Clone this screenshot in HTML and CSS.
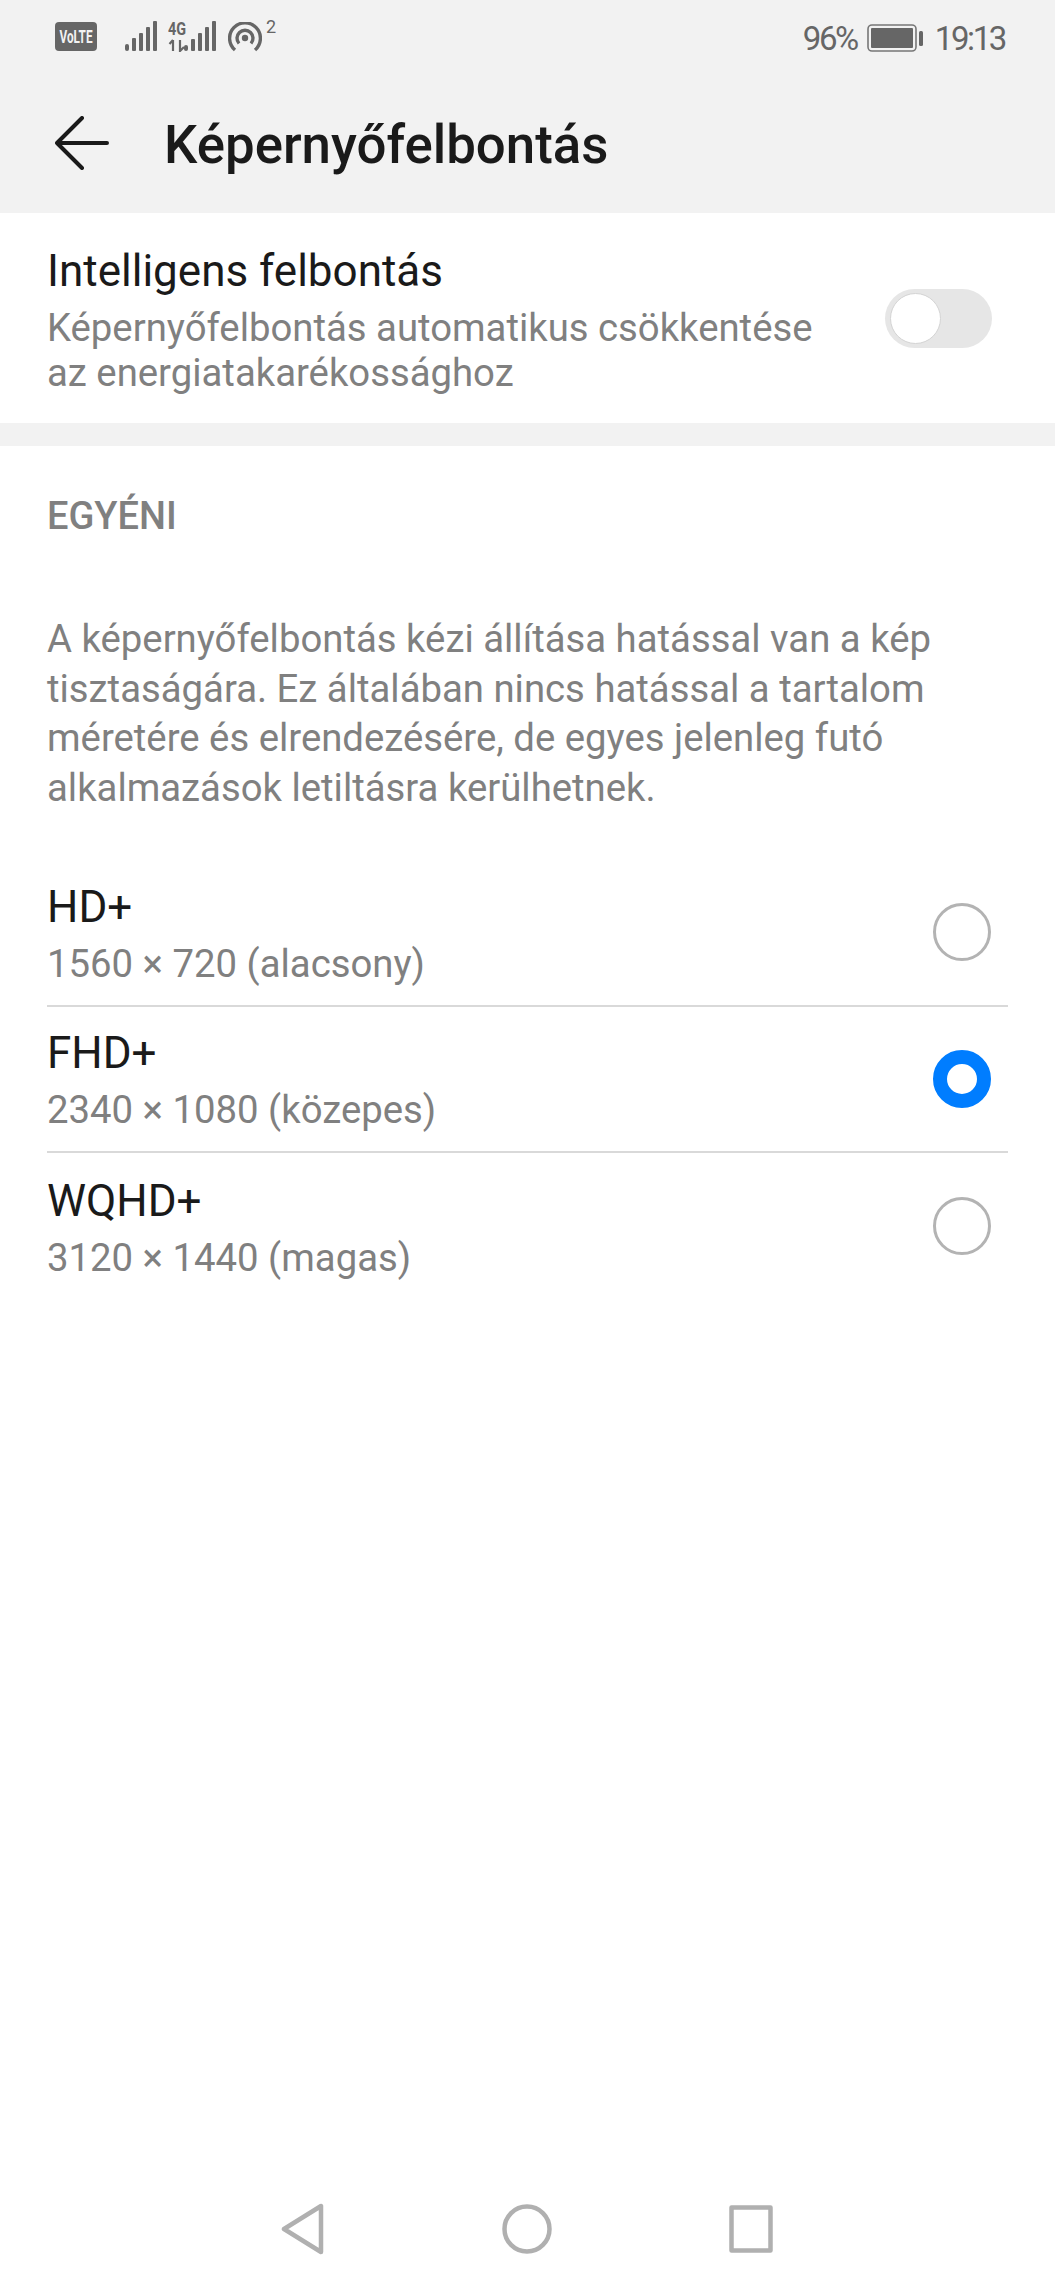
FILE: index.html
```html
<!DOCTYPE html>
<html lang="hu">
<head>
  <meta charset="UTF-8" />
  <title>Képernyőfelbontás</title>
  <link rel="stylesheet" href="styles.css">
</head>
<body>
  <div class="page">
    <header class="top">
      <div class="status">
        <div class="status-left">
          <svg class="ic-volte" width="42" height="29" viewBox="0 0 42 29">
            <rect width="42" height="29" rx="4" fill="#666"/>
            <text transform="translate(21 21) scale(.62 1)" text-anchor="middle" font-family="Roboto" font-weight="700" font-size="19" fill="#f2f2f2">VoLTE</text>
          </svg>
          <svg class="ic-sig" width="32" height="31" viewBox="0 0 32 31" fill="#666">
            <rect x="0" y="23" width="4" height="7" rx="2"/>
            <rect x="7" y="17" width="4" height="13" rx="1"/>
            <rect x="14" y="12" width="4" height="18" rx="1"/>
            <rect x="21" y="6" width="4" height="24" rx="1"/>
            <rect x="28" y="0" width="4" height="30" rx="1"/>
          </svg>
          <svg class="ic-sig4g" width="48" height="37" viewBox="0 -6 48 37" fill="#666">
            <text transform="translate(0 13.5) scale(.8 1)" font-family="Roboto" font-weight="700" font-size="18">4G</text>
            <path d="M5 19v11M1.5 23l3.5-4M12 19v11l4-4" fill="none" stroke="#666" stroke-width="2.2"/>
            <rect x="16" y="24" width="4" height="6" rx="2"/>
            <rect x="23" y="18" width="4" height="12" rx="1"/>
            <rect x="30" y="12" width="4" height="18" rx="1"/>
            <rect x="37" y="6" width="4" height="24" rx="1"/>
            <rect x="44" y="0" width="4" height="30" rx="1"/>
          </svg>
          <svg class="ic-hotspot" width="34" height="30" viewBox="0 0 34 30" fill="none" stroke="#666" stroke-width="3.4">
            <path d="M7 28A15.4 15.4 0 1 1 27 28"/>
            <path d="M11 21.5A8 8 0 1 1 23 21.5"/>
            <circle cx="17" cy="16" r="3.2" fill="#666" stroke="none"/>
          </svg>
          <span class="hotspot-count">2</span>
        </div>
        <div class="status-right">
          <span class="status-text">96%</span>
          <svg class="ic-batt" width="56" height="28" viewBox="0 0 56 28">
            <rect x="1" y="1" width="48" height="26" rx="4" fill="none" stroke="#777" stroke-width="1.6"/>
            <rect x="4" y="4" width="42" height="20" rx="1" fill="#666"/>
            <rect x="52" y="7" width="4" height="15" rx="1.5" fill="#666"/>
          </svg>
          <span class="status-text">19:13</span>
        </div>
      </div>
      <div class="toolbar">
        <svg class="ic-back" width="54" height="54" viewBox="0 0 54 54" fill="none" stroke="#1a1a1a" stroke-width="4" stroke-linecap="round" stroke-linejoin="round">
          <path d="M52 27H2M27 2L2 27l25 25"/>
        </svg>
        <h1 class="title">Képernyőfelbontás</h1>
      </div>
    </header>

    <section class="smart">
      <div class="smart-text">
        <div class="row-title">Intelligens felbontás</div>
        <div class="row-sub">Képernyőfelbontás automatikus csökkentése<br>az energiatakarékossághoz</div>
      </div>
      <div class="switch"><div class="knob"></div></div>
    </section>

    <main class="custom">
      <h2 class="section-label">EGYÉNI</h2>
      <p class="note">A képernyőfelbontás kézi állítása hatással van a kép tisztaságára. Ez általában nincs hatással a tartalom méretére és elrendezésére, de egyes jelenleg futó alkalmazások letiltásra kerülhetnek.</p>
      <div class="options">
        <div class="option">
          <div class="option-text">
            <div class="row-title">HD+</div>
            <div class="row-sub">1560 × 720 (alacsony)</div>
          </div>
          <div class="radio"></div>
        </div>
        <div class="option">
          <div class="option-text">
            <div class="row-title">FHD+</div>
            <div class="row-sub">2340 × 1080 (közepes)</div>
          </div>
          <div class="radio radio-on"></div>
        </div>
        <div class="option">
          <div class="option-text">
            <div class="row-title">WQHD+</div>
            <div class="row-sub">3120 × 1440 (magas)</div>
          </div>
          <div class="radio"></div>
        </div>
      </div>
    </main>

    <nav class="navbar">
      <svg width="44" height="52" viewBox="0 0 44 52" fill="none" stroke="#b0b0b0" stroke-width="4.5" stroke-linejoin="round">
        <path d="M40 3v46L3 26z"/>
      </svg>
      <svg width="50" height="50" viewBox="0 0 50 50" fill="none" stroke="#b0b0b0" stroke-width="4.5">
        <circle cx="25" cy="25" r="22.5"/>
      </svg>
      <svg width="44" height="48" viewBox="0 0 44 48" fill="none" stroke="#b0b0b0" stroke-width="4.5" stroke-linejoin="round">
        <rect x="2.5" y="2.5" width="39" height="43"/>
      </svg>
    </nav>
  </div>
</body>
</html>
```

FILE: styles.css
```css
* {
  box-sizing: border-box;
}
body {
  margin: 0;
  background: #fff;
  font-family: Roboto, "Noto Sans", sans-serif;
  color: #1a1a1a;
}
.page {
  height: 2286px;
  display: flex;
  flex-direction: column;
  overflow: hidden;
}
.top {
  background: #f2f2f2;
  height: 213px;
  padding: 0 48px 0 55px;
}
.status {
  height: 60px;
  padding-top: 20px;
  display: flex;
  justify-content: space-between;
  align-items: flex-start;
}
.status-left {
  display: flex;
  align-items: flex-start;
}
.ic-volte {
  margin-top: 2px;
}
.ic-sig {
  margin: 1px 0 0 28px;
}
.ic-sig4g {
  margin: -5px 0 0 11px;
}
.ic-hotspot {
  margin: 2px 0 0 12px;
}
.hotspot-count {
  font-size: 18px;
  line-height: 20px;
  margin: -3px 0 0 4px;
  color: #666;
}
.status-right {
  display: flex;
  align-items: center;
  height: 32px;
  margin-top: 2px;
  margin-right: 2px;
}
.status-text {
  font-size: 33px;
  letter-spacing: -2.4px;
  color: #666;
}
.ic-batt {
  margin: 0 12px 0 10px;
}
.toolbar {
  display: flex;
  align-items: center;
  height: 110px;
  margin-top: 28px;
}
.ic-back {
  flex: none;
}
.title {
  margin: 4px 0 0 55px;
  font-size: 52.8px;
  font-weight: 500;
  color: #1a1a1a;
}
.smart {
  height: 210px;
  padding: 0 63px 0 47px;
  display: flex;
  justify-content: space-between;
  align-items: center;
}
.smart-text {
  padding-top: 6px;
}
.row-title {
  font-size: 44px;
  line-height: 48px;
  color: #1a1a1a;
}
.row-sub {
  font-size: 38.3px;
  line-height: 45px;
  color: #808080;
  margin-top: 10px;
}
.switch {
  width: 107px;
  height: 59px;
  border-radius: 30px;
  background: #e6e6e6;
  padding: 4px 5px;
}
.knob {
  width: 51px;
  height: 51px;
  border-radius: 50%;
  background: #fff;
  border: 1px solid #d4d4d4;
}
.custom {
  flex: 1;
  border-top: 23px solid #f2f2f2;
  padding: 0 47px;
  background: #fff;
}
.section-label {
  margin: 0;
  padding-top: 50px;
  font-size: 38px;
  line-height: 40px;
  font-weight: 500;
  color: #808080;
}
.note {
  margin: 78px 0 0;
  font-size: 38.3px;
  line-height: 49.5px;
  color: #808080;
}
.options {
  margin-top: 48px;
}
.option {
  height: 146.5px;
  display: flex;
  justify-content: space-between;
  align-items: center;
  padding-right: 17px;
  border-bottom: 2px solid #d9d9d9;
}
.option:last-child {
  border-bottom: 0;
}
.option-text {
  padding-top: 4px;
}
.radio {
  width: 58px;
  height: 58px;
  border-radius: 50%;
  border: 3px solid #b3b3b3;
}
.radio-on {
  border: 14px solid #007dff;
}
.navbar {
  height: 130px;
  padding: 15px 282px 0 281px;
  display: flex;
  justify-content: space-between;
  align-items: center;
}
```
